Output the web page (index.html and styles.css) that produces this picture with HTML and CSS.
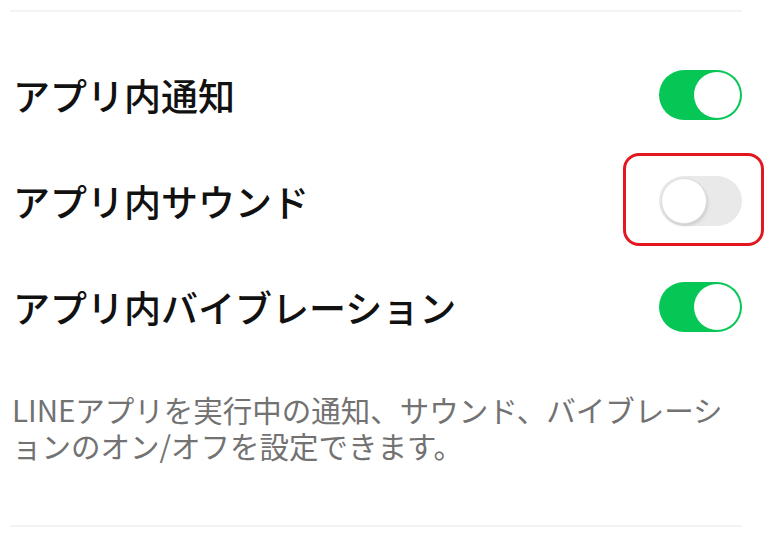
FILE: index.html
```html
<!DOCTYPE html>
<html lang="ja">
<head>
<meta charset="utf-8">
<link rel="stylesheet" href="styles.css">
</head>
<body>
<div class="page">
  <div class="divider top"></div>
  <div class="list">
    <div class="row">
      <span class="label">アプリ内通知</span>
      <span class="toggle on"><span class="knob"></span></span>
    </div>
    <div class="row">
      <span class="label">アプリ内サウンド</span>
      <span class="toggle-wrap">
        <span class="toggle off"><span class="knob"></span></span>
        <span class="highlight"></span>
      </span>
    </div>
    <div class="row">
      <span class="label">アプリ内バイブレーション</span>
      <span class="toggle on"><span class="knob"></span></span>
    </div>
  </div>
  <p class="desc">LINEアプリを実行中の通知、サウンド、バイブレーションのオン/オフを設定できます。</p>
  <div class="divider bottom"></div>
</div>
</body>
</html>
```
FILE: styles.css
```css
* { box-sizing: border-box; }
html, body { margin: 0; padding: 0; background: #fff; }
body { font-family: "Noto Sans CJK JP", "Noto Sans", sans-serif; }
.page { width: 769px; height: 556px; padding: 0 27px 0 10px; overflow: hidden; }
.divider { height: 2px; background: #f3f3f3; }
.divider.top { margin-top: 10px; }
.list { padding-top: 30px; }
.row {
  height: 106px;
  display: flex;
  align-items: center;
  justify-content: space-between;
}
.label {
  font-size: 37px;
  font-weight: 500;
  color: #111;
  padding-left: 3px;
  line-height: 1;
}
.toggle-wrap { position: relative; display: flex; }
.toggle {
  width: 83px;
  height: 50px;
  border-radius: 25px;
  display: flex;
  align-items: center;
  padding: 0 2px;
}
.toggle.on { background: #06c755; justify-content: flex-end; }
.toggle.off { background: #e9e9e9; justify-content: flex-start; }
.knob {
  width: 46px;
  height: 46px;
  border-radius: 50%;
  background: #fff;
}
.toggle.off .knob {
  border: 1px solid #dcdcdc;
  box-shadow: 1px 2px 3px rgba(0,0,0,0.12);
}
.highlight {
  position: absolute;
  left: -36px;
  right: -22px;
  top: -23px;
  bottom: -20px;
  border: 3.5px solid #e3171f;
  border-radius: 16px;
}
.desc {
  margin: 31px 0 0;
  padding-left: 2px;
  font-size: 29.5px;
  line-height: 36px;
  color: #727272;
}
.divider.bottom { margin-top: 62px; }
```
